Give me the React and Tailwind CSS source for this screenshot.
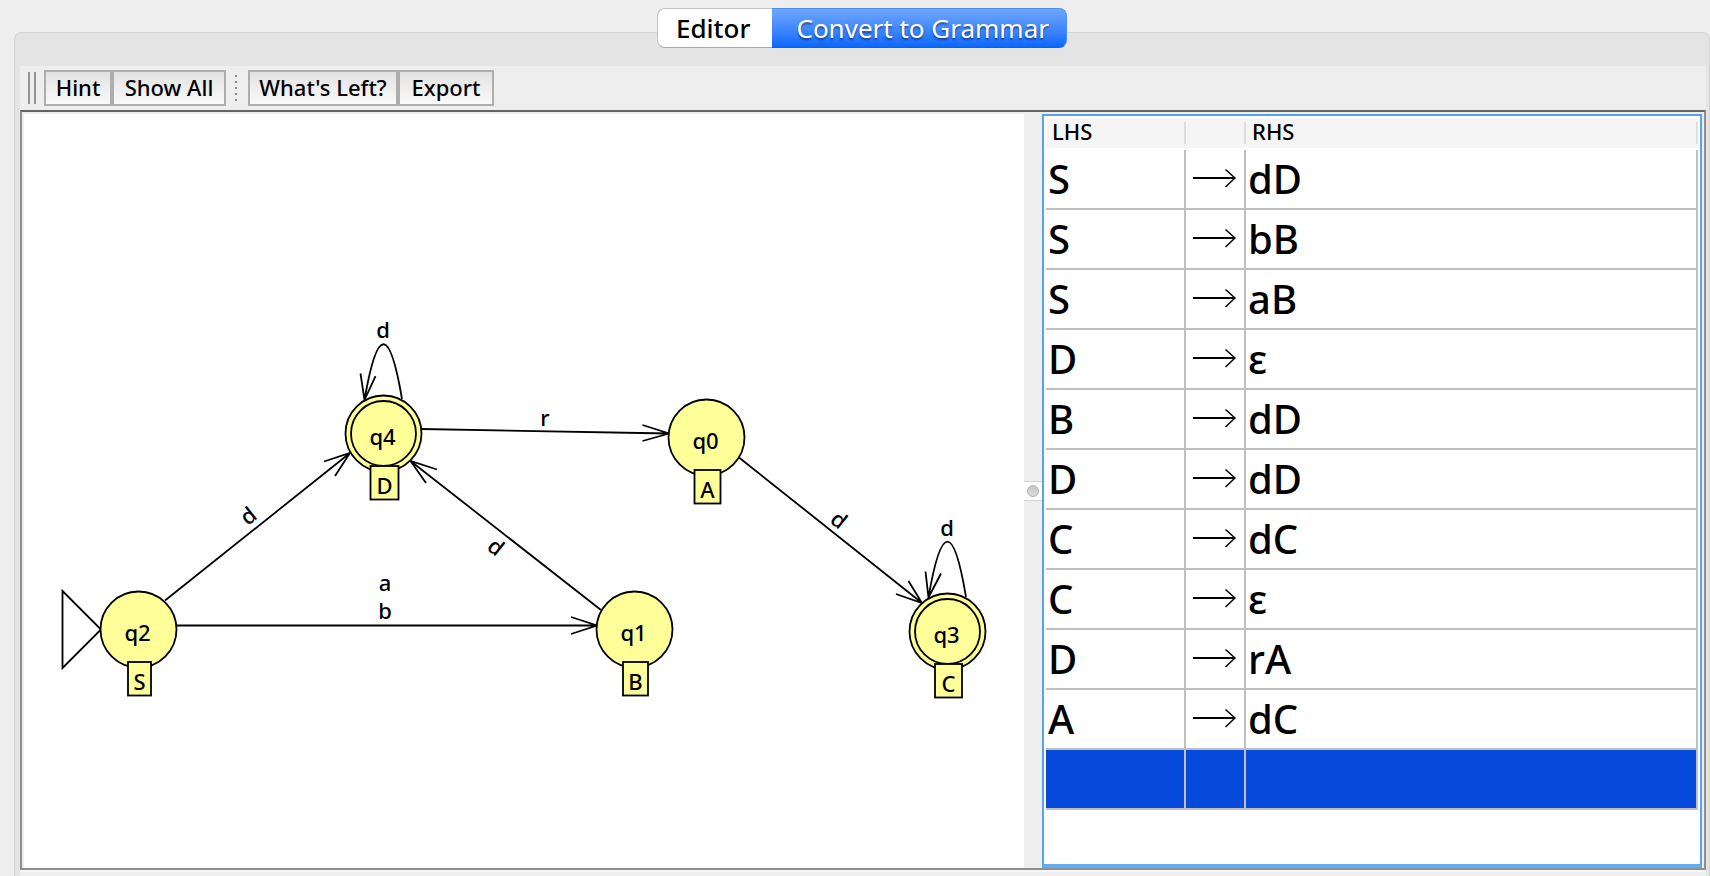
const NODES = [
  { id: "q4", x: 383.5, y: 433.5, final: true, variable: "D", box: 28 },
  { id: "q0", x: 706.5, y: 437.5, final: false, variable: "A", box: 26 },
  { id: "q2", x: 138.5, y: 629.5, final: false, variable: "S", box: 23 },
  { id: "q1", x: 634.5, y: 629.5, final: false, variable: "B", box: 25 },
  { id: "q3", x: 947.5, y: 631.5, final: true, variable: "C", box: 27 },
];

const EDGES = [
  "M421.5 429 L669 433.5 M642.5 425 L669 433.5 L642.5 441",
  "M165 600.5 L350 453 M324 461.5 L350 453 L335 476",
  "M177 625.5 L597 625.5 M571 617 L597 625.5 L571 634",
  "M601 610 L410.5 461 M437 469.5 L410.5 461 L426 483",
  "M739 457.5 L922 603 M896 594 L922 603 L908.5 581",
  "M402 399 Q383.5 289 364.5 400 M360.5 373.5 L364.5 400 L375.5 376",
  "M966 597 Q947.5 486 928.5 597.5 M925.5 571.5 L928.5 597.5 L941 573.5",
];

const EDGE_LABELS = [
  { text: "d", x: 383, y: 338, angle: 0 },
  { text: "r", x: 545, y: 426, angle: 0 },
  { text: "d", x: 253, y: 522, angle: -38.5 },
  { text: "d", x: 491, y: 553, angle: 38.5 },
  { text: "d", x: 834, y: 526, angle: 38.5 },
  { text: "d", x: 947, y: 536, angle: 0 },
  { text: "a", x: 385, y: 591, angle: 0 },
  { text: "b", x: 385, y: 619, angle: 0 },
];

const PRODUCTIONS = [
  ["S", "dD"],
  ["S", "bB"],
  ["S", "aB"],
  ["D", "ε"],
  ["B", "dD"],
  ["D", "dD"],
  ["C", "dC"],
  ["C", "ε"],
  ["D", "rA"],
  ["A", "dC"],
];

function ToolButton({ children, width }) {
  return (
    <button
      type="button"
      className={`${width} h-9 shrink-0 border-2 border-[#adadad] bg-linear-to-b from-[#e2e2e2] to-[#f9f9f9] pb-[2px] text-center text-[22px] leading-[30px] whitespace-nowrap`}
    >
      {children}
    </button>
  );
}

function Toolbar() {
  return (
    <div role="toolbar" aria-label="Conversion tools" className="flex h-11 shrink-0 items-center bg-[#eeeeee] pl-2">
      <span className="h-8 w-2 shrink-0 border-x-2 border-[#929292]" />
      <div className="ml-2 flex">
        <ToolButton width="w-[68px]">Hint</ToolButton>
        <ToolButton width="w-[114px]">Show All</ToolButton>
      </div>
      <div className="flex w-[22px] shrink-0 flex-col gap-1 pl-[9px]">
        {[0, 1, 2, 3, 4].map((dot) => (
          <span key={dot} className="size-[2px] bg-[#8c8c8c]" />
        ))}
      </div>
      <div className="flex">
        <ToolButton width="w-[150px]">What's Left?</ToolButton>
        <ToolButton width="w-[96px]">Export</ToolButton>
      </div>
    </div>
  );
}

function Automaton() {
  return (
    <svg
      viewBox="24 114 1000 754"
      preserveAspectRatio="xMinYMin meet"
      className="block h-full w-full"
      role="img"
      aria-label="Automaton with states q0 to q4"
    >
      <g fill="none" stroke="#000" strokeWidth="1.8">
        <path d="M62.5 591 L101 629.5 L62.5 668 Z" />
        {EDGES.map((d) => (
          <path key={d} d={d} />
        ))}
      </g>
      {NODES.map((n) => (
        <g key={n.id} fill="#ffff99" stroke="#000" strokeWidth="1.8">
          <circle cx={n.x} cy={n.y} r="38" />
          {n.final && <circle cx={n.x} cy={n.y} r="32.5" />}
          <rect x={n.x + 1 - n.box / 2} y={n.y + 32.5} width={n.box} height="33.5" />
          <g fill="#000" stroke="none" fontSize="22" textAnchor="middle">
            <text x={n.x - 1} y={n.y + 11}>{n.id}</text>
            <text x={n.x + 1} y={n.y + 60.5}>{n.variable}</text>
          </g>
        </g>
      ))}
      <g fontSize="22" textAnchor="middle">
        {EDGE_LABELS.map((l) => (
          <text key={`${l.x}-${l.y}`} transform={`translate(${l.x} ${l.y}) rotate(${l.angle})`}>
            {l.text}
          </text>
        ))}
      </g>
    </svg>
  );
}

function Divider() {
  return (
    <div className="flex w-[18px] shrink-0 items-center bg-[#eeeeee]">
      <button
        type="button"
        aria-label="Resize panes"
        className="flex h-5 w-full items-center justify-center border-y border-[#d2d2d2] bg-[#fcfcfc]"
      >
        <span className="size-3 rounded-full border border-[#b4b4b4] bg-linear-to-b from-[#c6c6c6] to-[#dcdcdc]" />
      </button>
    </div>
  );
}

function Arrow() {
  return (
    <svg width="44" height="20" viewBox="0 0 44 20" className="mb-[2px] ml-[6px] block" role="img" aria-label="produces">
      <path d="M1 10H43" stroke="#000" strokeWidth="2" fill="none" />
      <path d="M33.5 1.5L43 10L33.5 19" stroke="#000" strokeWidth="1.5" fill="none" />
    </svg>
  );
}

function GrammarTable() {
  const cell = "h-[60px] border-r-2 border-b-2 border-[#bfbfbf] p-0";
  const head = "h-8 border-b-2 border-white bg-[#f5f5f5] p-0 text-left font-medium";
  const label = "h-[22px] border-r-2 border-[#dddddd] pl-[6px] text-[22px] leading-[18px]";
  return (
    <table className="w-full table-fixed border-separate border-spacing-0">
      <colgroup>
        <col className="w-[140px]" />
        <col className="w-[60px]" />
        <col />
      </colgroup>
      <thead>
        <tr>
          <th className={head}><div className={label}>LHS</div></th>
          <th className={head} aria-label="Arrow"><div className={label} /></th>
          <th className={head}><div className={label}>RHS</div></th>
        </tr>
      </thead>
      <tbody>
        {PRODUCTIONS.map(([lhs, rhs], i) => (
          <tr key={i} className="text-[40px] leading-[58px]">
            <td className={`${cell} pl-[2px]`}>{lhs}</td>
            <td className={cell}><Arrow /></td>
            <td className={`${cell} pl-[2px]`}>{rhs}</td>
          </tr>
        ))}
        <tr className="bg-[#064adb]" aria-selected="true">
          <td className={cell} />
          <td className={cell} />
          <td className={cell} />
        </tr>
      </tbody>
    </table>
  );
}

export default function App() {
  return (
    <div className="flex h-screen min-h-[876px] flex-col bg-[#eeeeee] pt-2 pl-[14px] font-['Noto_Sans',sans-serif] font-medium text-black">
      <div role="tablist" className="relative z-10 flex h-10 shrink-0 justify-center text-[26px] leading-9">
        <button
          type="button"
          role="tab"
          aria-selected="false"
          className="rounded-l-lg border border-r-0 border-[#c4c4c4] border-b-[#a8a8a8] bg-white pr-[22px] pl-[18px]"
        >
          Editor
        </button>
        <button
          type="button"
          role="tab"
          aria-selected="true"
          className="rounded-r-lg border border-l-0 border-[#4a8df0] border-b-[#1560dc] bg-linear-to-b from-[#6ea6fd] to-[#0568ff] pr-[17px] pl-6 font-normal text-white [text-shadow:0_2px_2px_rgba(0,0,0,0.45)]"
        >
          Convert to Grammar
        </button>
      </div>
      <div className="-mt-4 flex min-h-0 flex-1 flex-col rounded-t-lg border border-b-0 border-[#d4d4d4] bg-[#e4e4e4] pt-[33px] pr-[3px] pl-[5px]">
        <Toolbar />
        <div className="flex min-h-0 flex-1 border-2 border-t-[#636363] border-r-[#8e8e8e] border-b-[#8e8e8e] border-l-[#8e8e8e] bg-[#eeeeee] px-[2px] pt-[2px]">
          <div className="min-w-0 flex-[1000_1_0%] bg-white">
            <Automaton />
          </div>
          <Divider />
          <div className="flex min-w-0 flex-[660_1_0%]">
            <div className="min-w-0 flex-1 border-2 border-b-4 border-[#55a3e8] border-b-[#62adf0] bg-white p-[2px]">
              <GrammarTable />
            </div>
          </div>
        </div>
        <div className="h-[6px] shrink-0 border-t-2 border-[#f6f6f6] bg-[#eeeeee]" />
      </div>
    </div>
  );
}
